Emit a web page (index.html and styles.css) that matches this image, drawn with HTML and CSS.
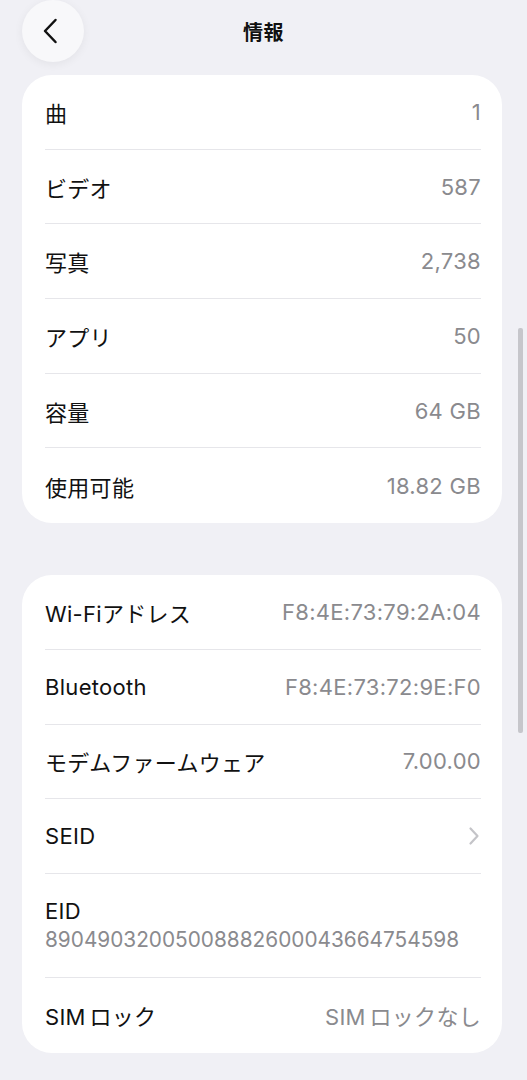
FILE: index.html
```html
<!DOCTYPE html>
<html lang="ja">
<head>
<meta charset="utf-8">
<link rel="stylesheet" href="styles.css">
</head>
<body>
<header class="nav">
  <div class="nav-left">
    <button class="back" aria-label="戻る">
      <svg width="22" height="28" viewBox="0 0 22 28"><path d="M15.5 3 L5 14 L15.5 25" fill="none" stroke="#111" stroke-width="2.5" stroke-linecap="round" stroke-linejoin="round"/></svg>
    </button>
  </div>
  <h1 class="title">情報</h1>
  <div class="nav-right"></div>
</header>
<main class="content">
  <section class="card">
    <div class="row"><span class="label">曲</span><span class="value">1</span></div>
    <div class="row"><span class="label">ビデオ</span><span class="value">587</span></div>
    <div class="row"><span class="label">写真</span><span class="value">2,738</span></div>
    <div class="row"><span class="label">アプリ</span><span class="value">50</span></div>
    <div class="row"><span class="label">容量</span><span class="value">64 GB</span></div>
    <div class="row"><span class="label">使用可能</span><span class="value">18.82 GB</span></div>
  </section>
  <section class="card card-second">
    <div class="row"><span class="label">Wi-Fiアドレス</span><span class="value">F8:4E:73:79:2A:04</span></div>
    <div class="row"><span class="label">Bluetooth</span><span class="value">F8:4E:73:72:9E:F0</span></div>
    <div class="row"><span class="label">モデムファームウェア</span><span class="value">7.00.00</span></div>
    <div class="row"><span class="label">SEID</span>
      <svg class="chev" width="12" height="20" viewBox="0 0 12 20"><path d="M2.5 2.5 L9.5 10 L2.5 17.5" fill="none" stroke="#c4c4c8" stroke-width="2.2" stroke-linecap="round" stroke-linejoin="round"/></svg>
    </div>
    <div class="row row-tall"><span class="label">EID</span><span class="sub">89049032005008882600043664754598</span></div>
    <div class="row"><span class="label">SIM<span class="thin"> </span>ロック</span><span class="value">SIM<span class="thin"> </span>ロックなし</span></div>
  </section>
</main>
<div class="scrollbar"></div>
</body>
</html>
```
FILE: styles.css
```css
* { box-sizing: border-box; }
html, body { margin: 0; padding: 0; }
body {
  background: #f0f0f5;
  font-family: "Inter", "Noto Sans CJK JP", sans-serif;
  color: #111;
  width: 527px;
  height: 1080px;
  overflow: hidden;
  position: relative;
}
.nav {
  display: grid;
  grid-template-columns: 1fr auto 1fr;
  align-items: center;
  height: 62px;
  padding: 0 22px;
}
.back {
  width: 62px;
  height: 62px;
  border-radius: 50%;
  border: none;
  background: #f8f8fa;
  box-shadow: 0 2px 10px rgba(0,0,0,0.06);
  display: flex;
  align-items: center;
  justify-content: center;
  padding: 0 4px 0 0;
}
.title {
  margin: 0;
  font-size: 20px;
  font-weight: 700;
  letter-spacing: 0.5px;
}
.content {
  padding: 13px 25px 0 22px;
  display: flex;
  flex-direction: column;
  gap: 52px;
}
.card {
  background: #fff;
  border-radius: 30px;
  padding: 0 21px 0 23px;
}
.row {
  display: flex;
  justify-content: space-between;
  align-items: center;
  height: 74.7px;
  border-bottom: 1px solid #e6e6ea;
}
.row:last-child { border-bottom: none; }
.label {
  font-size: 22px;
  letter-spacing: 0.3px;
  color: #111;
}
.value {
  font-size: 22px;
  letter-spacing: 0.3px;
  color: #8a8a8e;
}
.thin { font-size: 12px; }
.chev { margin-right: 1px; }
.row-tall {
  height: 104px;
  flex-direction: column;
  align-items: flex-start;
  justify-content: center;
  gap: 3px;
}
.sub {
  font-size: 20.8px;
  color: #8a8a8e;
}
.scrollbar {
  position: absolute;
  left: 518px;
  top: 328px;
  width: 4.5px;
  height: 405px;
  border-radius: 2px;
  background: #c6c6cb;
}
```
